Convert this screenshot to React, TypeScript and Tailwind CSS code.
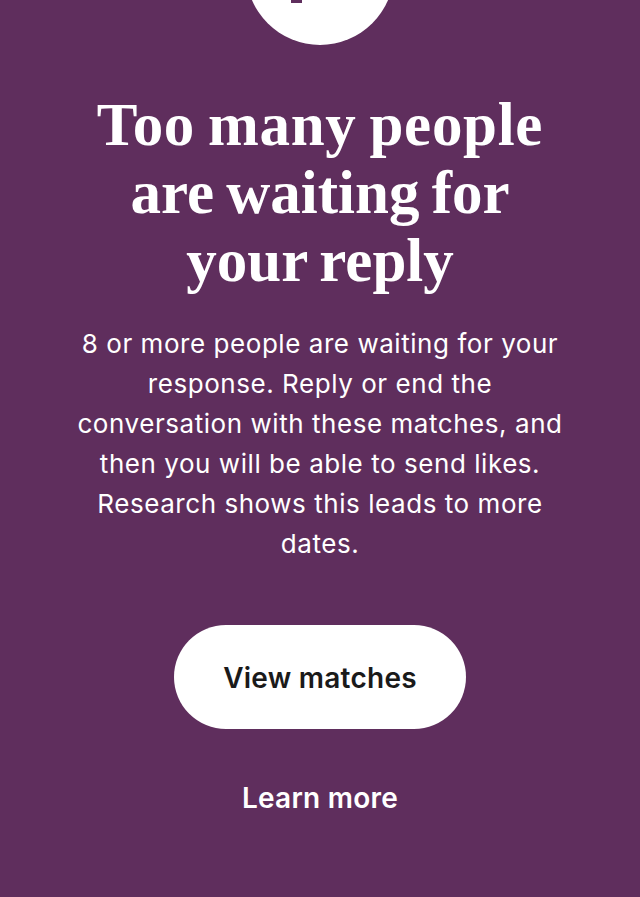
export default function App() {
  return (
    <div className="h-[897px] overflow-hidden bg-[#5f2e5d] flex flex-col items-center text-white font-['Inter',sans-serif]">
      <div className="mt-[-103px] w-[148px] h-[148px] rounded-full bg-white shrink-0 relative">
        <div className="absolute left-[45px] top-[103px] w-[11px] h-[3px] bg-[#5f2e5d]" />
      </div>
      <h1 className="mt-[46px] w-[560px] text-center text-[61px] leading-[68px] font-bold [word-spacing:-3px] font-['Liberation_Serif',serif]">
        <span className="tracking-[0.7px]">Too many people</span>
        <br />
        are waiting for
        <br />
        your reply
      </h1>
      <p className="mt-[29px] w-[540px] text-center text-[26px] leading-[40px] tracking-[0.55px]">
        8 or more people are waiting for your
        <br />
        response. Reply or end the
        <br />
        conversation with these matches, and
        <br />
        then you will be able to send likes.
        <br />
        Research shows this leads to more
        <br />
        dates.
      </p>
      <button className="mt-[61px] w-[292px] h-[104px] pt-[2px] rounded-[52px] bg-white text-[#1a1a1a] text-[28px] tracking-[0.25px] font-semibold">
        View matches
      </button>
      <a className="mt-[49px] text-[28px] leading-[40px] tracking-[0.25px] font-semibold">Learn more</a>
    </div>
  );
}
